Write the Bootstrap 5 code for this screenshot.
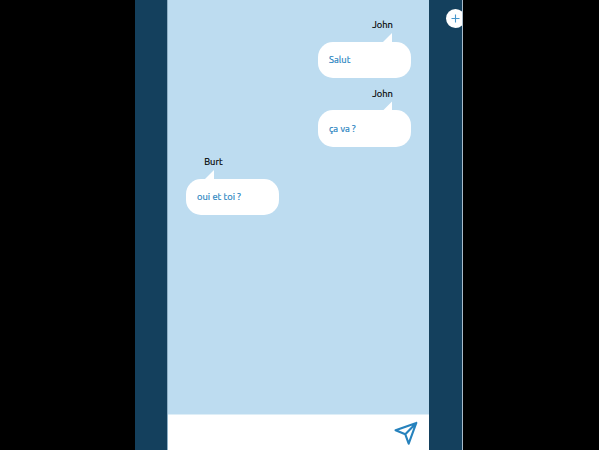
<!DOCTYPE html>
<html lang="fr">
<head>
<meta charset="utf-8">
<meta name="viewport" content="width=device-width, initial-scale=1">
<title>Chat</title>
<link href="https://cdn.jsdelivr.net/npm/bootstrap@5.3.0/dist/css/bootstrap.min.css" rel="stylesheet">
<style>
body{background:#000;font-family:Ubuntu,"Noto Sans",sans-serif;font-size:9.3px;line-height:12px;-webkit-text-stroke:.2px currentColor}
.phone{width:328px;margin-left:135px;background:#14405d;border-right:1px solid #a9bccb}
.chat{width:262px;margin-left:32px;background:#bddcf0;border-left:1px solid #8fb0c6}
.messages{padding:19.3px 18px 0}
.message{width:93px;height:68.5px}
.author{padding:0 18.2px;color:#000;height:22.7px}
.bubble{height:36.2px;border-radius:15px;background:#fff;color:#2682c0;padding:0 11px;letter-spacing:.06px}
.bubble::before{content:"";position:absolute;top:-9px;width:10px;height:10px;background:#fff;clip-path:polygon(100% 0,100% 100%,0 100%)}
.sent .bubble::before{right:19px}
.received .bubble::before{left:18px}
.composer{height:36px;padding-right:11.5px;border-top:1px solid #deeef7}
.add{width:19px;height:19px;top:9px;right:-3px}
</style>
<script src="https://cdn.jsdelivr.net/npm/bootstrap@5.3.0/dist/js/bootstrap.bundle.min.js"></script>
</head>
<body class="overflow-hidden">
<main class="phone vh-100 position-relative overflow-hidden">
  <section class="chat h-100 d-flex flex-column">
    <div class="messages flex-grow-1 d-flex flex-column">
      <div class="message sent align-self-end">
        <div class="author text-end">John</div>
        <div class="bubble position-relative d-flex align-items-center">Salut</div>
      </div>
      <div class="message sent align-self-end">
        <div class="author text-end">John</div>
        <div class="bubble position-relative d-flex align-items-center">ça va ?</div>
      </div>
      <div class="message received align-self-start">
        <div class="author">Burt</div>
        <div class="bubble position-relative d-flex align-items-center">oui et toi ?</div>
      </div>
    </div>
    <div class="composer bg-white d-flex align-items-center justify-content-end">
      <svg width="24" height="24" viewBox="0 0 24 24" fill="none" stroke="#2682bd" stroke-width="2.1" stroke-linejoin="round" stroke-linecap="round" role="img" aria-label="Envoyer"><path d="M22.3 1.9 1.6 9.3l9.7 4L14.7 22.7Z M22.3 1.9 11.3 13.3"/></svg>
    </div>
  </section>
  <div class="add position-absolute rounded-circle bg-white d-flex align-items-center justify-content-center">
    <svg width="9" height="9" viewBox="0 0 9 9" stroke="#4796cb" stroke-width="1.1" role="img" aria-label="Ajouter"><path d="M4.5.5v8M.5 4.5h8"/></svg>
  </div>
</main>
</body>
</html>
